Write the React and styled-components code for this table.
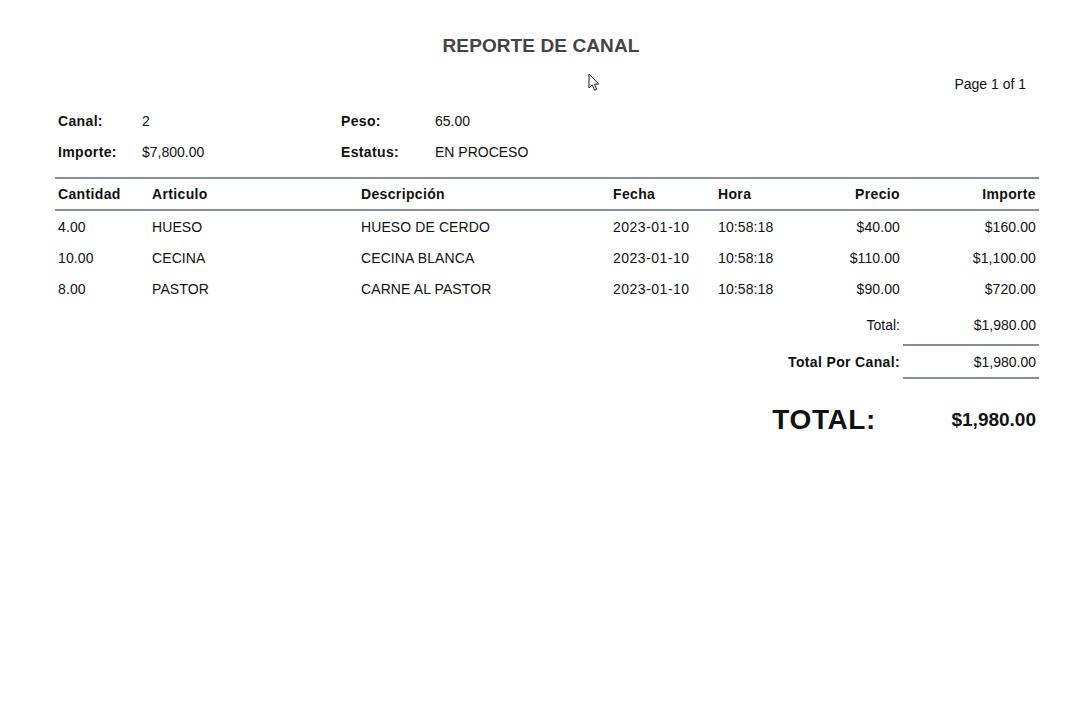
import React from 'react';
import styled, { createGlobalStyle } from 'styled-components';

const GlobalStyle = createGlobalStyle`
  html, body {
    margin: 0;
    padding: 0;
    background: #fff;
  }
  body {
    font-family: "Liberation Sans", Arial, sans-serif;
    color: #111;
  }
`;

// datos del reporte
const info = [
  { label: 'Canal:', value: '2', label2: 'Peso:', value2: '65.00' },
  { label: 'Importe:', value: '$7,800.00', label2: 'Estatus:', value2: 'EN PROCESO' },
];

const rows = [
  { cantidad: '4.00', articulo: 'HUESO', descripcion: 'HUESO DE CERDO', fecha: '2023-01-10', hora: '10:58:18', precio: '$40.00', importe: '$160.00' },
  { cantidad: '10.00', articulo: 'CECINA', descripcion: 'CECINA BLANCA', fecha: '2023-01-10', hora: '10:58:18', precio: '$110.00', importe: '$1,100.00' },
  { cantidad: '8.00', articulo: 'PASTOR', descripcion: 'CARNE AL PASTOR', fecha: '2023-01-10', hora: '10:58:18', precio: '$90.00', importe: '$720.00' },
];

const COLS = '94px 209px 252px 105px 75px 113px 136px';

function Cursor() {
  return (
    <CursorBox>
      <svg width="13" height="19" viewBox="0 0 13 19">
        <path
          d="M1 1 L1 15 L4.3 11.9 L6.6 17.2 L8.7 16.3 L6.4 11.1 L10.8 11.1 Z"
          fill="#fff"
          stroke="#222"
          strokeWidth="1"
          strokeLinejoin="round"
        />
      </svg>
    </CursorBox>
  );
}

function App() {
  return (
    <>
      <GlobalStyle />
      <Page>
        <Title>REPORTE DE CANAL</Title>
        <PageNo>Page 1 of 1</PageNo>
        <Cursor />

        <Report>
          <InfoGrid>
            {info.map((r) => (
              <React.Fragment key={r.label}>
                <InfoLabel>{r.label}</InfoLabel>
                <InfoValue>{r.value}</InfoValue>
                <InfoLabel>{r.label2}</InfoLabel>
                <InfoValue>{r.value2}</InfoValue>
              </React.Fragment>
            ))}
          </InfoGrid>

          <HeaderRow>
            <Cell bold>Cantidad</Cell>
            <Cell bold>Articulo</Cell>
            <Cell bold>Descripción</Cell>
            <Cell bold>Fecha</Cell>
            <Cell bold>Hora</Cell>
            <Cell bold right>Precio</Cell>
            <Cell bold right>Importe</Cell>
          </HeaderRow>

          {rows.map((r, i) => (
            <DataRow key={i}>
              <Cell>{r.cantidad}</Cell>
              <Cell>{r.articulo}</Cell>
              <Cell>{r.descripcion}</Cell>
              <Cell spaced>{r.fecha}</Cell>
              <Cell>{r.hora}</Cell>
              <Cell right>{r.precio}</Cell>
              <Cell right>{r.importe}</Cell>
            </DataRow>
          ))}

          <TotalRow first>
            <TotalLabel>Total:</TotalLabel>
            <TotalValue>$1,980.00</TotalValue>
          </TotalRow>
          <TotalRow>
            <TotalLabel bold>Total Por Canal:</TotalLabel>
            <TotalValue lined>$1,980.00</TotalValue>
          </TotalRow>

          <GrandRow>
            <GrandLabel>TOTAL:</GrandLabel>
            <GrandValue>$1,980.00</GrandValue>
          </GrandRow>
        </Report>
      </Page>
    </>
  );
}

export default App;

const Page = styled.div`
  position: relative;
  width: 1085px;
  height: 726px;
  background: #fff;
  display: flex;
  flex-direction: column;
  overflow: hidden;
`;

const Title = styled.div`
  margin-top: 34px;
  height: 24px;
  line-height: 24px;
  text-align: center;
  font-size: 19px;
  font-weight: 700;
  letter-spacing: 0.1px;
  padding-right: 3px;
  color: #444;
`;

const PageNo = styled.div`
  margin-top: 16px;
  height: 20px;
  line-height: 20px;
  padding-right: 59px;
  text-align: right;
  font-size: 14px;
  color: #111;
`;

const CursorBox = styled.div`
  position: absolute;
  left: 588px;
  top: 73px;
  width: 13px;
  height: 19px;
`;

const Report = styled.div`
  margin: 11px 0 0 55px;
  width: 984px;
  display: flex;
  flex-direction: column;
`;

const InfoGrid = styled.div`
  display: grid;
  grid-template-columns: 84px 199px 94px 1fr;
  grid-auto-rows: 31px;
  align-items: center;
  font-size: 14px;
  margin-bottom: 10px;
`;

const InfoLabel = styled.div`
  padding-left: 3px;
  font-weight: 700;
  letter-spacing: 0.35px;
`;

const InfoValue = styled.div`
  padding-left: 3px;
`;

const HeaderRow = styled.div`
  display: grid;
  grid-template-columns: ${COLS};
  align-items: center;
  height: 30px;
  border-top: 2px solid #8a9097;
  border-bottom: 2px solid #8a9097;
  font-size: 14px;
`;

const DataRow = styled.div`
  display: grid;
  grid-template-columns: ${COLS};
  align-items: center;
  height: 31px;
  padding-bottom: 1px;
  margin-bottom: -1px;
  font-size: 14px;
`;

const Cell = styled.div`
  padding: 0 3px;
  white-space: nowrap;
  text-align: ${(p) => (p.right ? 'right' : 'left')};
  font-weight: ${(p) => (p.bold ? 700 : 400)};
  letter-spacing: ${(p) => (p.bold ? '0.35px' : p.spaced ? '0.5px' : '0.1px')};
`;

const TotalRow = styled.div`
  display: grid;
  grid-template-columns: 848px 136px;
  align-items: stretch;
  font-size: 14px;
  margin-top: ${(p) => (p.first ? '5px' : '0')};
`;

const TotalLabel = styled.div`
  display: flex;
  align-items: center;
  justify-content: flex-end;
  padding-right: 3px;
  height: 31px;
  font-weight: ${(p) => (p.bold ? 700 : 400)};
  letter-spacing: ${(p) => (p.bold ? '0.35px' : '0')};
  margin-top: ${(p) => (p.bold ? '4px' : '0')};
  border-top: ${(p) => (p.bold ? '2px solid transparent' : '0')};
`;

const TotalValue = styled.div`
  display: flex;
  align-items: center;
  justify-content: flex-end;
  padding-right: 3px;
  height: 31px;
  margin-top: ${(p) => (p.lined ? '4px' : '0')};
  border-top: ${(p) => (p.lined ? '2px solid #8a9097' : '0')};
  border-bottom: ${(p) => (p.lined ? '2px solid #8a9097' : '0')};
`;

const GrandRow = styled.div`
  display: grid;
  grid-template-columns: 848px 136px;
  align-items: center;
  height: 40px;
  margin-top: 21px;
`;

const GrandLabel = styled.div`
  justify-self: end;
  margin-right: 27px;
  font-size: 28px;
  font-weight: 700;
  letter-spacing: 0.6px;
  color: #111;
`;

const GrandValue = styled.div`
  text-align: right;
  padding-right: 3px;
  font-size: 19px;
  font-weight: 700;
  color: #111;
`;
